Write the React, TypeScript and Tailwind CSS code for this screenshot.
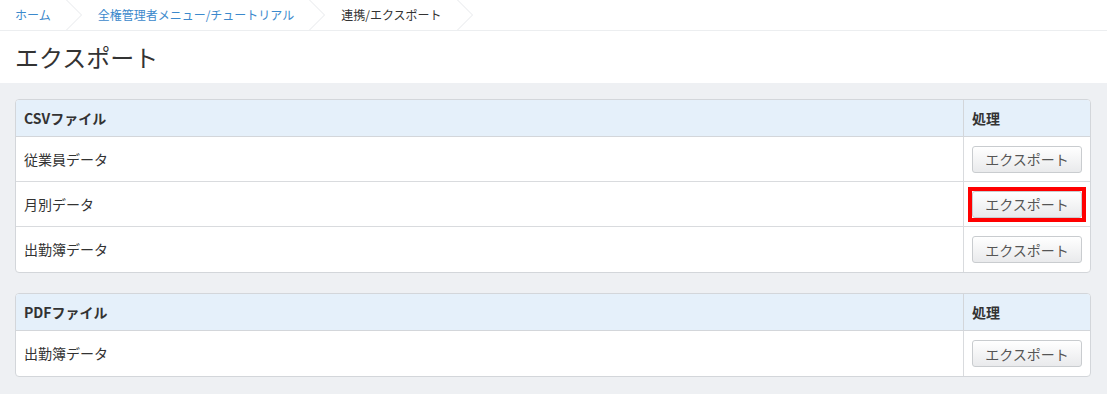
const font = { fontFamily: '"Noto Sans CJK JP", "Liberation Sans", sans-serif' };

function Chevron() {
  return (
    <svg width="16" height="30" viewBox="0 0 16 30" className="shrink-0">
      <polyline points="0.5,0 15.5,15 0.5,30" fill="none" stroke="#e6e8eb" strokeWidth="1" />
    </svg>
  );
}

const crumbs = [
  { label: "ホーム", link: true },
  { label: "全権管理者メニュー/チュートリアル", link: true },
  { label: "連携/エクスポート", link: false },
];

function ExportButton({ highlight }: { highlight?: boolean }) {
  const btn = (
    <button className="h-[27px] w-[110px] rounded-[3px] border border-[#c9cccf] bg-gradient-to-b from-white to-[#e9eaec] text-[14px] leading-none text-[#555]">
      エクスポート
    </button>
  );
  if (!highlight) return btn;
  return <div className="-m-[4px] inline-flex border-[4px] border-[#f00]">{btn}</div>;
}

type Row = { name: string; highlight?: boolean };

function Panel({ title, rows }: { title: string; rows: Row[] }) {
  return (
    <div className="mb-[20px] overflow-hidden rounded-[4px] border border-[#d3d6da] bg-white">
      <div className="flex h-[37px] items-center border-b border-[#d3d6da] bg-[#e5f0fa] text-[14px] font-bold text-[#333]">
        <div className="flex-1 pl-[8px]">{title}</div>
        <div className="flex h-full w-[127px] items-center border-l border-[#d3d6da] pl-[8px]">処理</div>
      </div>
      {rows.map((r, i) => (
        <div
          key={i}
          className={`flex h-[45px] items-center text-[14px] text-[#333] ${i < rows.length - 1 ? "border-b border-[#d9dbde]" : ""}`}
        >
          <div className="flex-1 pl-[8px]">{r.name}</div>
          <div className="flex h-full w-[127px] items-center border-l border-[#d9dbde] pl-[8px]">
            <ExportButton highlight={r.highlight} />
          </div>
        </div>
      ))}
    </div>
  );
}

export default function App() {
  return (
    <div style={font} className="min-h-[394px] w-full bg-[#eef0f3]">
      <div className="bg-white">
        <nav className="flex h-[31px] items-center border-b border-[#eceef0] pl-[15px] text-[12px]">
          {crumbs.map((c, i) => (
            <div key={i} className="flex h-full items-center">
              <span className={c.link ? "text-[#3c89cc]" : "text-[#333]"}>{c.label}</span>
              <span className="ml-[15px] mr-[16px] flex h-full items-center">
                <Chevron />
              </span>
            </div>
          ))}
        </nav>
        <h1 className="flex h-[52px] items-center pl-[15px] text-[24px] font-normal text-[#333]">エクスポート</h1>
      </div>
      <div className="pl-[15px] pr-[16px] pt-[16px]">
        <Panel
          title="CSVファイル"
          rows={[{ name: "従業員データ" }, { name: "月別データ", highlight: true }, { name: "出勤簿データ" }]}
        />
        <Panel title="PDFファイル" rows={[{ name: "出勤簿データ" }]} />
      </div>
    </div>
  );
}
